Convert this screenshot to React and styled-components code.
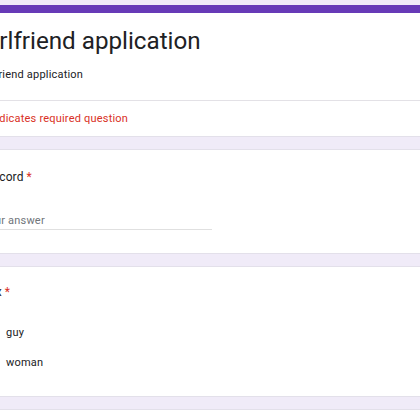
import React from "react";
import styled, { createGlobalStyle } from "styled-components";

const GlobalStyle = createGlobalStyle`
  html, body {
    margin: 0;
    padding: 0;
    background: #f0ebf8;
    overflow: hidden;
    font-family: Roboto, "Liberation Sans", Arial, sans-serif;
    color: #202124;
  }
`;

const Page = styled.main`
  width: 499px;
  margin-left: -38px;
  padding-top: 5px;
  display: flex;
  flex-direction: column;
  gap: 12px;
`;

const Card = styled.section`
  background: #ffffff;
  border: 1px solid #e3e0ea;
  border-top: ${(p) => (p.$accent ? "8px solid #673ab7" : "1px solid #e3e0ea")};
  border-radius: 6px;
  display: flex;
  flex-direction: column;
`;

const HeaderSection = styled.div`
  padding: 12px 19px 17px 14px;
  border-bottom: 1px solid #e3e1e6;
  display: flex;
  flex-direction: column;
  gap: 10px;
`;

const FormTitle = styled.h1`
  margin: 0;
  font-size: 24.2px;
  line-height: 32px;
  font-weight: 400;
  color: #202124;
`;

const Description = styled.p`
  margin: 0;
  font-size: 11px;
  line-height: 16px;
  letter-spacing: 0.2px;
  color: #202124;
`;

const RequiredNote = styled.p`
  margin: 0;
  padding: 10px 19px 9px;
  font-size: 11px;
  line-height: 16px;
  letter-spacing: 0.2px;
  color: #d93025;
`;

const QuestionBody = styled.div`
  padding: ${(p) => p.$pad || "18px 19px 23px"};
  display: flex;
  flex-direction: column;
  gap: ${(p) => p.$gap || "27px"};
`;

const QuestionTitle = styled.h2`
  margin: 0;
  font-size: 12px;
  line-height: 18px;
  font-weight: 400;
  letter-spacing: 0.1px;
  color: #202124;
`;

const Star = styled.span`
  color: #d93025;
  margin-left: 3px;
`;

const AnswerLine = styled.div`
  width: 50%;
  font-size: 11px;
  line-height: 16px;
  letter-spacing: 0.2px;
  color: #70757a;
  border-bottom: 1px solid #e0e0e0;
`;

const Options = styled.div`
  display: flex;
  flex-direction: column;
`;

const Option = styled.label`
  height: 30px;
  display: flex;
  align-items: center;
  gap: 8px;
  font-size: 11px;
  line-height: 16px;
  letter-spacing: 0.2px;
  color: #202124;
`;

const Radio = styled.span`
  width: 16px;
  height: 16px;
  box-sizing: border-box;
  border: 2px solid #5f6368;
  border-radius: 50%;
  flex: none;
`;

export default function App() {
  return (
    <>
      <GlobalStyle />
      <Page>
        <Card $accent>
          <HeaderSection>
            <FormTitle>Girlfriend application</FormTitle>
            <Description>Girlfriend application</Description>
          </HeaderSection>
          <RequiredNote>* Indicates required question</RequiredNote>
        </Card>

        <Card>
          <QuestionBody>
            <QuestionTitle>
              Discord<Star>*</Star>
            </QuestionTitle>
            <AnswerLine>Your answer</AnswerLine>
          </QuestionBody>
        </Card>

        <Card>
          <QuestionBody $pad="16px 19px 18px" $gap="17px">
            <QuestionTitle>
              Sex<Star>*</Star>
            </QuestionTitle>
            <Options>
              <Option>
                <Radio />
                guy
              </Option>
              <Option>
                <Radio />
                woman
              </Option>
            </Options>
          </QuestionBody>
        </Card>

        <Card>
          <QuestionBody>
            <QuestionTitle>
              Age<Star>*</Star>
            </QuestionTitle>
            <AnswerLine>Your answer</AnswerLine>
          </QuestionBody>
        </Card>
      </Page>
    </>
  );
}
